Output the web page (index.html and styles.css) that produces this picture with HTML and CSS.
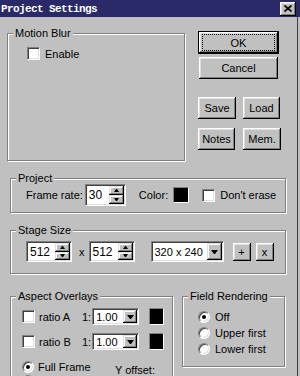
FILE: index.html
```html
<!DOCTYPE html>
<html lang="en">
<head>
    <meta charset="UTF-8">
    <title>Project Settings</title>
    <link rel="stylesheet" href="styles.css">
</head>
<body>
<div class="win">
    <div class="titlebar">
        <span class="title">Project Settings</span>
        <span class="close">
            <svg width="8" height="7" viewBox="0 0 8 7"><path d="M0.5 0.5l7 6M7.5 0.5l-7 6" stroke="#000" stroke-width="1.7"/></svg>
        </span>
    </div>

    <div class="content">
        <div class="top-row">
            <fieldset class="group motion">
                <legend>Motion Blur</legend>
                <div class="motion-body">
                    <label class="check-row"><span class="check"></span>Enable</label>
                </div>
            </fieldset>

            <div class="buttons">
                <button class="btn btn-ok"><span class="focus">OK</span></button>
                <button class="btn btn-cancel">Cancel</button>
                <div class="btn-pair first">
                    <button class="btn btn-save">Save</button>
                    <button class="btn btn-load">Load</button>
                </div>
                <div class="btn-pair">
                    <button class="btn btn-notes">Notes</button>
                    <button class="btn btn-mem">Mem.</button>
                </div>
            </div>
        </div>

        <fieldset class="group project">
            <legend>Project</legend>
            <div class="row project-row">
                <span class="lbl-rate">Frame rate:</span>
                <span class="spin rate">
                    <span class="spin-val">30</span>
                    <span class="spin-btns"><span class="sbtn"><i class="up"></i></span><span class="sbtn"><i class="down"></i></span></span>
                </span>
                <span class="lbl-color">Color:</span>
                <span class="swatch color-swatch"></span>
                <label class="check-row erase"><span class="check"></span>Don't erase</label>
            </div>
        </fieldset>

        <fieldset class="group stage">
            <legend>Stage Size</legend>
            <div class="row stage-row">
                <span class="spin size">
                    <span class="spin-val">512</span>
                    <span class="spin-btns"><span class="sbtn"><i class="up"></i></span><span class="sbtn"><i class="down"></i></span></span>
                </span>
                <span class="times">x</span>
                <span class="spin size">
                    <span class="spin-val">512</span>
                    <span class="spin-btns"><span class="sbtn"><i class="up"></i></span><span class="sbtn"><i class="down"></i></span></span>
                </span>
                <span class="combo preset">
                    <span class="combo-val">320 x 240</span>
                    <span class="drop"><i class="arrow"></i></span>
                </span>
                <button class="btn small add">+</button>
                <button class="btn small remove">x</button>
            </div>
        </fieldset>

        <div class="bottom-row">
            <fieldset class="group aspect">
                <legend>Aspect Overlays</legend>
                <div class="aspect-body">
                    <div class="ov-row">
                        <span class="check"></span>
                        <span class="ov-name">ratio A</span>
                        <span>1:</span>
                        <span class="combo ratio">
                            <span class="combo-val">1.00</span>
                            <span class="drop"><i class="arrow"></i></span>
                        </span>
                        <span class="swatch ov-swatch"></span>
                    </div>
                    <div class="ov-row second">
                        <span class="check"></span>
                        <span class="ov-name">ratio B</span>
                        <span>1:</span>
                        <span class="combo ratio">
                            <span class="combo-val">1.00</span>
                            <span class="drop"><i class="arrow"></i></span>
                        </span>
                        <span class="swatch ov-swatch"></span>
                    </div>
                    <div class="frame-row">
                        <span class="radio on"><span class="dot"></span></span>
                        <span class="frame-name">Full Frame</span>
                        <span class="yoffset">Y offset:</span>
                    </div>
                    <div class="frame-row last">
                        <span class="radio"></span>
                    </div>
                </div>
            </fieldset>

            <fieldset class="group field">
                <legend>Field Rendering</legend>
                <div class="field-body">
                    <div class="radio-row"><span class="radio on"><span class="dot"></span></span>Off</div>
                    <div class="radio-row"><span class="radio"></span>Upper first</div>
                    <div class="radio-row"><span class="radio"></span>Lower first</div>
                </div>
            </fieldset>
        </div>
    </div>
</div>
</body>
</html>
```

FILE: styles.css
```css
body {
    margin: 0;
    font-family: "Liberation Sans", Arial, sans-serif;
    font-size: 11px;
    color: #000;
    background: #c0c0c0;
}
.win {
    width: 300px;
    height: 376px;
    overflow: hidden;
    background: #c0c0c0;
}

/* title bar */
.titlebar {
    height: 17px;
    background: #2a2a68;
    display: flex;
    align-items: center;
    justify-content: space-between;
    padding: 0 4px 0 1px;
}
.title {
    font-family: "Liberation Mono", monospace;
    font-weight: bold;
    font-size: 11px;
    letter-spacing: -0.6px;
    color: #fff;
}
.close {
    width: 16px;
    height: 14px;
    background: #c0c0c0;
    box-sizing: border-box;
    box-shadow: inset -1px -1px #000, inset 1px 1px #fff, inset -2px -2px #808080, inset 2px 2px #dfdfdf;
    display: flex;
    align-items: center;
    justify-content: center;
}
.close svg {
    display: block;
}

.content {
    width: 298px;
    height: 359px;
    box-sizing: border-box;
    border-right: 1px solid #404040;
    padding: 10px 0 0 7px;
}

/* group boxes */
.group {
    margin: 0;
    padding: 0;
    min-width: 0;
    box-sizing: border-box;
    border: 1px solid #808080;
    box-shadow: inset 1px 1px #fff, 1px 1px #fff;
}
.group legend {
    margin-left: 5px;
    padding: 0 2px;
    line-height: 12px;
    background: #c0c0c0;
}

.top-row {
    display: flex;
    align-items: flex-start;
}
.motion {
    width: 178px;
    height: 134px;
}
.motion-body {
    padding: 8px 0 0 19px;
}

/* check boxes and radios */
.check-row {
    display: flex;
    align-items: center;
}
.check {
    width: 13px;
    height: 13px;
    flex: none;
    box-sizing: border-box;
    background: #fff;
    border: 1px solid;
    border-color: #808080 #fff #fff #808080;
    box-shadow: inset 1px 1px #404040, inset -1px -1px #dfdfdf;
    margin-right: 5px;
}
.radio {
    width: 12px;
    height: 12px;
    flex: none;
    box-sizing: border-box;
    border-radius: 50%;
    background: #fff;
    border: 1px solid;
    border-color: #808080 #fff #fff #808080;
    box-shadow: inset 1px 1px #404040, inset -1px -1px #dfdfdf;
    display: flex;
    align-items: center;
    justify-content: center;
    margin-right: 5px;
}
.dot {
    width: 4px;
    height: 4px;
    border-radius: 50%;
    background: #000;
}

/* push buttons */
.btn {
    font: inherit;
    color: #000;
    padding: 0;
    border: 0;
    background: #c0c0c0;
    box-sizing: border-box;
    box-shadow: inset -1px -1px #000, inset 1px 1px #fff, inset -2px -2px #808080, inset 2px 2px #dfdfdf;
    display: flex;
    align-items: center;
    justify-content: center;
    height: 22px;
}
.buttons {
    margin-left: 13px;
    padding-top: 4px;
    width: 83px;
    display: flex;
    flex-direction: column;
}
.btn-ok {
    width: 81px;
    height: 23px;
    border: 1px solid #000;
    align-items: stretch;
}
.focus {
    flex: 1;
    margin: 2px 3px;
    border: 1px dotted #000;
    display: flex;
    align-items: center;
    justify-content: center;
}
.btn-cancel {
    width: 79px;
    margin: 3px 0 0 1px;
}
.btn-pair {
    display: flex;
    margin-top: 9px;
}
.btn-pair.first {
    margin-top: 18px;
}
.btn-save {
    width: 38px;
}
.btn-load {
    width: 37px;
    margin-left: 7px;
}
.btn-notes {
    width: 37px;
}
.btn-mem {
    width: 38px;
    margin-left: 8px;
}

/* rows */
.row {
    display: flex;
    align-items: center;
}
.project {
    margin: 11px 0 0 3px;
    width: 276px;
    height: 41px;
}
.project-row {
    padding-left: 15px;
    height: 22px;
}
.lbl-rate {
    margin-right: 2px;
}
.lbl-color {
    margin-left: 13px;
}
.color-swatch {
    width: 16px;
    height: 16px;
    margin-left: 5px;
}
.erase {
    margin-left: 13px;
}

.stage {
    margin: 11px 0 0 3px;
    width: 276px;
    height: 50px;
}
.stage-row {
    padding: 5px 0 0 15px;
}
.times {
    margin: 0 4px 0 7px;
}
.add {
    width: 18px;
    height: 18px;
    margin-left: 9px;
}
.remove {
    width: 18px;
    height: 18px;
    margin-left: 5px;
}

/* spin fields and combos */
.spin, .combo {
    display: flex;
    box-sizing: border-box;
    background: #fff;
    border: 1px solid;
    border-color: #808080 #fff #fff #808080;
    box-shadow: inset 1px 1px #404040, inset -1px -1px #dfdfdf;
    padding: 1px;
}
.spin-val, .combo-val {
    flex: 1;
    display: flex;
    align-items: center;
    padding-left: 2px;
    font-size: 12px;
}
.combo-val {
    font-size: 11px;
}
.spin-btns {
    display: flex;
    flex-direction: column;
    width: 15px;
}
.sbtn {
    flex: 1;
    display: flex;
    align-items: center;
    justify-content: center;
    background: #c0c0c0;
    box-shadow: inset -1px -1px #000, inset 1px 1px #dfdfdf, inset -2px -2px #808080, inset 2px 2px #fff;
}
.up {
    width: 1px;
    border-left: 2px solid transparent;
    border-right: 2px solid transparent;
    border-bottom: 3px solid #000;
}
.down {
    width: 1px;
    border-left: 2px solid transparent;
    border-right: 2px solid transparent;
    border-top: 3px solid #000;
}
.rate {
    width: 41px;
    height: 22px;
}
.size {
    width: 46px;
    height: 21px;
}
.preset {
    width: 73px;
    height: 21px;
    margin-left: 16px;
}
.drop {
    width: 15px;
    display: flex;
    align-items: center;
    justify-content: center;
    background: #c0c0c0;
    box-shadow: inset -1px -1px #000, inset 1px 1px #dfdfdf, inset -2px -2px #808080, inset 2px 2px #fff;
}
.arrow {
    width: 1px;
    border-left: 3px solid transparent;
    border-right: 3px solid transparent;
    border-top: 4px solid #000;
}
.swatch {
    box-sizing: border-box;
    background: #000;
    border: 1px solid;
    border-color: #808080 #fff #fff #808080;
}

/* bottom groups */
.bottom-row {
    display: flex;
    align-items: flex-start;
    margin: 16px 0 0 3px;
}
.aspect {
    width: 163px;
    height: 100px;
}
.aspect-body {
    padding: 6px 0 0 11px;
}
.ov-row {
    display: flex;
    align-items: center;
    height: 17px;
}
.ov-row.second {
    margin-top: 8px;
}
.ov-row .check {
    margin-right: 4px;
}
.ov-name {
    width: 43px;
}
.ratio {
    width: 47px;
    height: 17px;
    margin-left: 1px;
}
.ratio .drop {
    width: 14px;
}
.ov-swatch {
    width: 15px;
    height: 17px;
    margin-left: 10px;
}
.frame-row {
    display: flex;
    align-items: center;
    height: 13px;
    margin-top: 10px;
}
.frame-row.last {
    margin-top: 1px;
}
.frame-row .radio {
    margin-right: 4px;
}
.frame-name {
    width: 77px;
}
.yoffset {
    padding-top: 6px;
}

.field {
    width: 103px;
    height: 77px;
    margin-left: 9px;
}
.field-body {
    padding: 7px 0 0 15px;
}
.radio-row {
    display: flex;
    align-items: center;
    height: 16px;
}
```
